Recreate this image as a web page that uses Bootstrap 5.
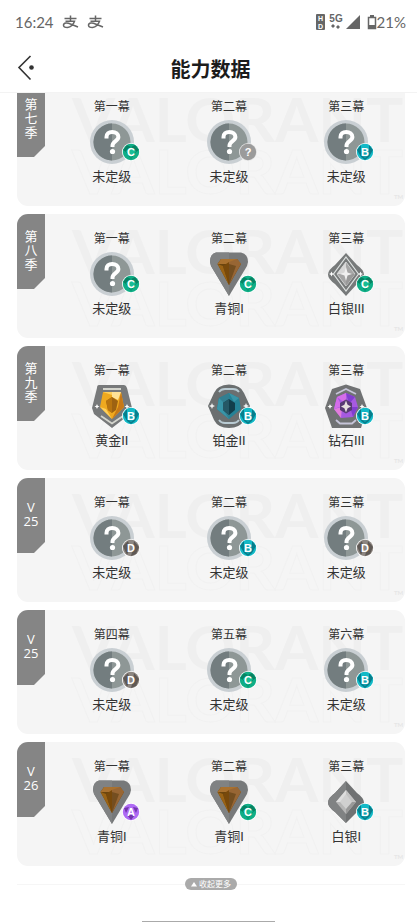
<!DOCTYPE html>
<html lang="zh-CN">
<head>
<meta charset="utf-8">
<meta name="viewport" content="width=device-width, initial-scale=1">
<title>能力数据</title>
<link href="https://cdn.jsdelivr.net/npm/bootstrap@5.3.0/dist/css/bootstrap.min.css" rel="stylesheet">
<style>
body{font-family:"Noto Sans CJK SC",sans-serif;color:#333;background:#fff}
.topbar{z-index:5;border-bottom:1px solid #f3f3f3}
.statusbar{height:44px;padding:0 11px 0 15px;font-family:Lato,sans-serif;font-size:15px;line-height:20px;color:#666}
.titlebar{height:48px;padding:2px 13px 0 17px}
.titlebar h1{font-size:20px;line-height:28px;color:#1c1c1c}
.back{width:24px;height:28px}
.seasons{margin:-11px 12px 0 17px;gap:8px}
.season{height:124px;padding-left:36px;background:#f5f5f5;border-radius:11px}
.season-tab{left:0;top:0;width:28px;height:75px;background:#858585;color:#fff;font-size:13px;line-height:14px;font-weight:400;clip-path:polygon(0 0,100% 0,100% 64px,17px 100%,0 100%);padding-bottom:4px}
.season-tab span{width:13px}
.vtab span{width:auto;font-family:"Open Sans",sans-serif}
.wordmark{left:55px;top:10px;font-family:Lato,sans-serif;font-weight:700;font-size:62px;line-height:52px;color:#efefef;user-select:none}
.wordmark .hollow{color:#f5f5f5;-webkit-text-stroke:1px #f1f1f1}
.wordmark .tm{font-size:6px;line-height:6px;right:0;bottom:-4px;color:#e6e6e6}
.act{padding-top:15px}
.act-label{font-size:12px;line-height:18px;margin-bottom:5px}
.rank-name{font-family:Roboto,"Noto Sans CJK SC",sans-serif;font-size:13px;line-height:18px;margin-top:4px}
.rank{width:44px;height:44px}
.rank svg{display:block}
.grade{left:32px;top:23px}
.foot{margin:12px 12px 0 17px}
.foot hr{border-color:#ddd;margin:0}
.more{background:#aaa;border-radius:6px;height:12px;width:52px;color:#fff;font-size:8px;line-height:12px;gap:2px}
.homebar{width:133px;height:1px;background:#aaa}
svg text{font-family:"Liberation Sans",sans-serif;font-weight:700;text-anchor:middle;fill:#fff}
</style>
<script src="https://cdn.jsdelivr.net/npm/bootstrap@5.3.0/dist/js/bootstrap.bundle.min.js"></script>
</head>
<body>
<svg width="0" height="0" class="position-absolute" aria-hidden="true">
<defs>
<symbol id="r-none" viewBox="0 0 44 44"><circle cx="22" cy="22" r="22" fill="#c9cfd3"/><circle cx="22" cy="22" r="18.500" fill="#8e9796"/><path d="M22 3.500a18.500 18.500 0 0 0 0 37z" fill="#737d7f"/><path d="M16.500 18.500V17c0-3.200 2.200-5 5.700-5s6.200 1.800 6.200 5c0 4-5.900 4.200-5.900 8.500v1.500" fill="none" stroke="#fff" stroke-width="4"/><circle cx="22.500" cy="31.500" r="2.600" fill="#fff"/></symbol>
<symbol id="r-bronze" viewBox="0 0 44 44"><path d="M9 .500H34Q41 2 41 10L40 14 22 44 4 14 3 10Q3 2 9 .500z" fill="#77797a"/><path d="M22 .500V44L4 14 3 10Q3 2 9 .500z" fill="#808283"/><path d="M14 7H30L34 12 22 33 10.500 12z" fill="#6b450f"/><path d="M14 7H30L34 12H10.500z" fill="#a9712f"/><path d="M22 10L30 7 34 12 22 33z" fill="#986634"/><path d="M10.500 12L16 14 22 33z" fill="#9a6315"/><path d="M16 14L22 10 22 33z" fill="#78490b"/><path d="M22 12L29 14 22 33z" fill="#744e20"/></symbol>
<symbol id="r-silver1" viewBox="0 0 44 44"><path d="M22 1L33 13Q40 18 40 22.500T33 32L22 43 11 32Q4 27 4 22.500T11 13z" fill="#707273"/><path d="M22 1V43L11 32Q4 27 4 22.500T11 13z" fill="#808283"/><path d="M22 10L32 22 22 34 12 22z" fill="#b6b6b6"/><path d="M22 10V22L12 22z" fill="#dedede"/><path d="M22 10L32 22H22z" fill="#c3c3c3"/><path d="M22 22L32 22 22 34z" fill="#999"/><path d="M22 14L28 22 22 29 16 22z" fill="#d0d0d0"/></symbol>
<symbol id="r-silver3" viewBox="0 0 44 44"><path d="M22 1L33 13Q40 18 40 22.500T33 32L22 44 11 32Q4 27 4 22.500T11 13z" fill="#777a7a"/><path d="M22 5L34.500 22 22 39 9.500 22z" fill="none" stroke="#dfe3e2" stroke-width="1.200"/><path d="M22 10L31 22 22 34 13 22z" fill="#a6a6a6" stroke="#cfd1d1"/><path d="M22 10V22L13 22z" fill="#d8d8d8"/><path d="M22 22L31 22 22 34z" fill="#999"/><path d="M22 15L23.500 20.500 28 22 23.500 23.500 22 29 20.500 23.500 16 22 20.500 20.500z" fill="#f0f0f0"/><path d="M7.500 19.500l.8 1.700 1.700.8-1.700.8-.8 1.700-.8-1.700-1.700-.8 1.700-.8zM36.500 19.500l.8 1.700 1.700.8-1.700.8-.8 1.700-.8-1.700-1.700-.8 1.700-.8z" fill="#fff"/></symbol>
<symbol id="r-gold" viewBox="0 0 44 44"><path d="M9 1H34Q36 1 37 4L42 24 40 30 22 44 4 30 2 24 7 4Q7 1 9 1z" fill="#77797a"/><path d="M13 5H31M11 32L22 39.500 33 32" fill="none" stroke="#d4d5cd" stroke-width="1.800"/><path d="M13 8H31L34 23 22 35 10 23z" fill="#efa91f"/><path d="M13 8L22 11V8zM10 23L16 25 22 35z" fill="#ffd05b"/><path d="M31 8L34 23 22 35 28 23z" fill="#c77817"/><path d="M22 8L31 8 28 16 22 13z" fill="#ffe296"/><path d="M22 13L28 17 26 26 22 29 18 26 16 17z" fill="#9d6212"/><path d="M22 13V29L18 26 16 17z" fill="#b77410"/><path d="M7 20l.8 1.700 1.700.8-1.700.8-.8 1.700-.8-1.700-1.700-.8 1.700-.8zM37 20l.8 1.700 1.700.8-1.700.8-.8 1.700-.8-1.700-1.700-.8 1.700-.8z" fill="#fff"/></symbol>
<symbol id="r-plat" viewBox="0 0 44 44"><path d="M22 .500Q34 1 37 9L43 22 37 36Q33 44 22 44T7 36L1 22 7 9Q10 1 22 .500z" fill="#6b6f70"/><path d="M12 8Q14 5 18 5H26Q30 5 32 8M12 36Q14 39 18 39H26Q30 39 32 36" fill="none" stroke="#b9cbd3" stroke-width="1.800"/><path d="M22 9L32 14 34 25 22 35 10 25 12 14z" fill="#258296"/><path d="M22 9V35L10 25 12 14z" fill="#327f91"/><path d="M12 14L16 18 17 27 22 35 10 25zM22 9L32 14 27 18z" fill="#3995a8"/><path d="M22 15L28 19V26L22 31 16 26V19z" fill="#123e4b"/><path d="M22 15V31L16 26V19z" fill="#255866"/><path d="M5 19l.9 2 2.100 1-2.100 1-.9 2-.9-2-2.100-1 2.100-1zM39 19l.9 2 2.100 1-2.100 1-.9 2-.9-2-2.100-1 2.100-1z" fill="#eee"/></symbol>
<symbol id="r-diamond" viewBox="0 0 44 44"><path d="M22 .500L36 5 43 24 37 44H8L1 24 8 5z" fill="#707273"/><path d="M12 10L22 5 32 10M12 36L16 39.500H28L32 36" fill="none" stroke="#c5c4d8" stroke-width="1.800"/><path d="M22 9L31 13 34 23 29 33 17 34 10 25 13 13z" fill="#a65ae0"/><path d="M22 9V20L13 13zM13 13L18 22 10 25z" fill="#d46de9"/><path d="M10 25L18 23 17 34z" fill="#e17ddb"/><path d="M22 9L31 13 25 20zM26 23L34 23 29 33z" fill="#813ecf"/><path d="M22 15.500L28 19 28 26 22 29.500 16 26 16 19z" fill="#573a73"/><path d="M22 16.500L23.600 20.800 27 22.500 23.600 24.200 22 28.500 20.400 24.200 17 22.500 20.400 20.800z" fill="#e6e1df"/><path d="M6 20l.8 1.700 1.700.8-1.700.8-.8 1.700-.8-1.700-1.700-.8 1.700-.8zM38 20l.8 1.700 1.700.8-1.700.8-.8 1.700-.8-1.700-1.700-.8 1.700-.8z" fill="#fff"/></symbol>
<symbol id="g-C" viewBox="0 0 18 18"><circle cx="9" cy="9" r="9" fill="#fff"/><circle cx="9" cy="9" r="8.200" fill="#0fae86"/><path d="M1 7L5 2 9 4 13 2 17 7 14 9 9 16 4 9z" fill="#078363"/><path d="M4 8L9 4 14 8 9 15z" fill="#16bd94"/><text x="9" y="13" font-size="11">C</text></symbol>
<symbol id="g-B" viewBox="0 0 18 18"><circle cx="9" cy="9" r="9" fill="#fff"/><circle cx="9" cy="9" r="8.200" fill="#13bac7"/><path d="M1 7L5 2V8L9 14 13 8V2L17 7 13 14 9 17 5 14z" fill="#087d8b"/><path d="M5 8L9 4 13 8V12L9 15 5 12z" fill="#12a4b2"/><text x="9" y="13" font-size="11">B</text></symbol>
<symbol id="g-D" viewBox="0 0 18 18"><circle cx="9" cy="9" r="9" fill="#fff"/><circle cx="9" cy="9" r="8.200" fill="#8d8681"/><path d="M1 7L6 2 8 9 5 16zM12 2L17 8 14 15 9 17 11 9z" fill="#5f5955"/><text x="9" y="13" font-size="11">D</text></symbol>
<symbol id="g-A" viewBox="0 0 18 18"><circle cx="9" cy="9" r="9" fill="#fff"/><circle cx="9" cy="9" r="8.200" fill="#ae6af4"/><path d="M2 5L7 4 4 10zM11 4L16 5 14 10zM5 12H13L9 17z" fill="#7336ad"/><text x="9" y="13" font-size="11">A</text></symbol>
<symbol id="g-N" viewBox="0 0 18 18"><circle cx="9" cy="9" r="9" fill="#e8e8e8"/><circle cx="9" cy="9" r="8.200" fill="#9b9b9b"/><text x="9" y="13" font-size="11">?</text></symbol>
<symbol id="pay" viewBox="0 0 16 14"><path d="M2 3.500H14M8 .500V6M3 6.300H12Q10 12 5 12.500 1 12.500 1 10.200C1 7.500 5 7.500 8 9L15.500 12" fill="none" stroke="#666" stroke-width="1.500"/></symbol>
</defs>
</svg>
<div class="d-flex flex-column min-vh-100 overflow-hidden">
<header class="topbar bg-white position-relative">
<div class="statusbar d-flex align-items-center justify-content-between">
<div class="d-flex align-items-center"><span class="me-2">16:24</span><svg class="me-2" width="17" height="14"><use href="#pay"/></svg><svg width="17" height="14"><use href="#pay"/></svg></div>
<div class="d-flex align-items-center">
<svg width="62" height="18" viewBox="0 0 62 18" role="img" aria-label="HD 5G"><rect x="1" y="1" width="9" height="16" rx="1" fill="#666"/><text x="5.500" y="8" font-size="7">H</text><text x="5.500" y="16" font-size="7">D</text><text x="21" y="9" font-size="10" style="fill:#666">5G</text><path d="M16 13l2-2 2 2-2 2zM21 14l2-2 2 2-2 2z" fill="#666"/><path d="M31 16L45 2V16z" fill="#666"/><path d="M53.500 4.500h7v11h-7z" fill="none" stroke="#666" stroke-width="1.500"/><path d="M55 2h4v2h-4zM53 12h8v4h-8z" fill="#666"/></svg>
<span>21%</span></div>
</div>
<div class="titlebar d-flex align-items-center justify-content-between">
<button type="button" class="back btn p-0 border-0 d-flex" aria-label="返回"><svg width="18" height="28" viewBox="0 0 18 28"><path d="M13.500 1L2 12.500 13.500 24.500" fill="none" stroke="#333" stroke-width="1.600"/><circle cx="14.500" cy="12.500" r="2.300" fill="#333"/></svg></button>
<h1 class="fw-bold m-0">能力数据</h1>
<span class="back"></span>
</div>
</header>
<main class="seasons d-flex flex-column">
<section class="season position-relative overflow-hidden">
<div class="wordmark position-absolute" aria-hidden="true"><div>VALORANT</div><div class="hollow">VALORANT</div><span class="tm position-absolute">TM</span></div>
<h2 class="season-tab position-absolute m-0 d-flex align-items-center justify-content-center text-center"><span>第七季</span></h2>
<div class="row g-0 text-center position-relative">
<div class="col act d-flex flex-column align-items-center"><div class="act-label">第一幕</div><div class="rank position-relative"><svg width="44" height="44"><use href="#r-none"/></svg><svg class="grade position-absolute" width="18" height="18"><use href="#g-C"/></svg></div><div class="rank-name">未定级</div></div>
<div class="col act d-flex flex-column align-items-center"><div class="act-label">第二幕</div><div class="rank position-relative"><svg width="44" height="44"><use href="#r-none"/></svg><svg class="grade position-absolute" width="18" height="18"><use href="#g-N"/></svg></div><div class="rank-name">未定级</div></div>
<div class="col act d-flex flex-column align-items-center"><div class="act-label">第三幕</div><div class="rank position-relative"><svg width="44" height="44"><use href="#r-none"/></svg><svg class="grade position-absolute" width="18" height="18"><use href="#g-B"/></svg></div><div class="rank-name">未定级</div></div>
</div>
</section>
<section class="season position-relative overflow-hidden">
<div class="wordmark position-absolute" aria-hidden="true"><div>VALORANT</div><div class="hollow">VALORANT</div><span class="tm position-absolute">TM</span></div>
<h2 class="season-tab position-absolute m-0 d-flex align-items-center justify-content-center text-center"><span>第八季</span></h2>
<div class="row g-0 text-center position-relative">
<div class="col act d-flex flex-column align-items-center"><div class="act-label">第一幕</div><div class="rank position-relative"><svg width="44" height="44"><use href="#r-none"/></svg><svg class="grade position-absolute" width="18" height="18"><use href="#g-C"/></svg></div><div class="rank-name">未定级</div></div>
<div class="col act d-flex flex-column align-items-center"><div class="act-label">第二幕</div><div class="rank position-relative"><svg width="44" height="44"><use href="#r-bronze"/></svg><svg class="grade position-absolute" width="18" height="18"><use href="#g-C"/></svg></div><div class="rank-name">青铜I</div></div>
<div class="col act d-flex flex-column align-items-center"><div class="act-label">第三幕</div><div class="rank position-relative"><svg width="44" height="44"><use href="#r-silver3"/></svg><svg class="grade position-absolute" width="18" height="18"><use href="#g-C"/></svg></div><div class="rank-name">白银III</div></div>
</div>
</section>
<section class="season position-relative overflow-hidden">
<div class="wordmark position-absolute" aria-hidden="true"><div>VALORANT</div><div class="hollow">VALORANT</div><span class="tm position-absolute">TM</span></div>
<h2 class="season-tab position-absolute m-0 d-flex align-items-center justify-content-center text-center"><span>第九季</span></h2>
<div class="row g-0 text-center position-relative">
<div class="col act d-flex flex-column align-items-center"><div class="act-label">第一幕</div><div class="rank position-relative"><svg width="44" height="44"><use href="#r-gold"/></svg><svg class="grade position-absolute" width="18" height="18"><use href="#g-B"/></svg></div><div class="rank-name">黄金II</div></div>
<div class="col act d-flex flex-column align-items-center"><div class="act-label">第二幕</div><div class="rank position-relative"><svg width="44" height="44"><use href="#r-plat"/></svg><svg class="grade position-absolute" width="18" height="18"><use href="#g-B"/></svg></div><div class="rank-name">铂金II</div></div>
<div class="col act d-flex flex-column align-items-center"><div class="act-label">第三幕</div><div class="rank position-relative"><svg width="44" height="44"><use href="#r-diamond"/></svg><svg class="grade position-absolute" width="18" height="18"><use href="#g-B"/></svg></div><div class="rank-name">钻石III</div></div>
</div>
</section>
<section class="season position-relative overflow-hidden">
<div class="wordmark position-absolute" aria-hidden="true"><div>VALORANT</div><div class="hollow">VALORANT</div><span class="tm position-absolute">TM</span></div>
<h2 class="season-tab vtab position-absolute m-0 d-flex align-items-center justify-content-center text-center"><span>V<br>25</span></h2>
<div class="row g-0 text-center position-relative">
<div class="col act d-flex flex-column align-items-center"><div class="act-label">第一幕</div><div class="rank position-relative"><svg width="44" height="44"><use href="#r-none"/></svg><svg class="grade position-absolute" width="18" height="18"><use href="#g-D"/></svg></div><div class="rank-name">未定级</div></div>
<div class="col act d-flex flex-column align-items-center"><div class="act-label">第二幕</div><div class="rank position-relative"><svg width="44" height="44"><use href="#r-none"/></svg><svg class="grade position-absolute" width="18" height="18"><use href="#g-B"/></svg></div><div class="rank-name">未定级</div></div>
<div class="col act d-flex flex-column align-items-center"><div class="act-label">第三幕</div><div class="rank position-relative"><svg width="44" height="44"><use href="#r-none"/></svg><svg class="grade position-absolute" width="18" height="18"><use href="#g-D"/></svg></div><div class="rank-name">未定级</div></div>
</div>
</section>
<section class="season position-relative overflow-hidden">
<div class="wordmark position-absolute" aria-hidden="true"><div>VALORANT</div><div class="hollow">VALORANT</div><span class="tm position-absolute">TM</span></div>
<h2 class="season-tab vtab position-absolute m-0 d-flex align-items-center justify-content-center text-center"><span>V<br>25</span></h2>
<div class="row g-0 text-center position-relative">
<div class="col act d-flex flex-column align-items-center"><div class="act-label">第四幕</div><div class="rank position-relative"><svg width="44" height="44"><use href="#r-none"/></svg><svg class="grade position-absolute" width="18" height="18"><use href="#g-D"/></svg></div><div class="rank-name">未定级</div></div>
<div class="col act d-flex flex-column align-items-center"><div class="act-label">第五幕</div><div class="rank position-relative"><svg width="44" height="44"><use href="#r-none"/></svg><svg class="grade position-absolute" width="18" height="18"><use href="#g-C"/></svg></div><div class="rank-name">未定级</div></div>
<div class="col act d-flex flex-column align-items-center"><div class="act-label">第六幕</div><div class="rank position-relative"><svg width="44" height="44"><use href="#r-none"/></svg><svg class="grade position-absolute" width="18" height="18"><use href="#g-B"/></svg></div><div class="rank-name">未定级</div></div>
</div>
</section>
<section class="season position-relative overflow-hidden">
<div class="wordmark position-absolute" aria-hidden="true"><div>VALORANT</div><div class="hollow">VALORANT</div><span class="tm position-absolute">TM</span></div>
<h2 class="season-tab vtab position-absolute m-0 d-flex align-items-center justify-content-center text-center"><span>V<br>26</span></h2>
<div class="row g-0 text-center position-relative">
<div class="col act d-flex flex-column align-items-center"><div class="act-label">第一幕</div><div class="rank position-relative"><svg width="44" height="44"><use href="#r-bronze"/></svg><svg class="grade position-absolute" width="18" height="18"><use href="#g-A"/></svg></div><div class="rank-name">青铜I</div></div>
<div class="col act d-flex flex-column align-items-center"><div class="act-label">第二幕</div><div class="rank position-relative"><svg width="44" height="44"><use href="#r-bronze"/></svg><svg class="grade position-absolute" width="18" height="18"><use href="#g-C"/></svg></div><div class="rank-name">青铜I</div></div>
<div class="col act d-flex flex-column align-items-center"><div class="act-label">第三幕</div><div class="rank position-relative"><svg width="44" height="44"><use href="#r-silver1"/></svg><svg class="grade position-absolute" width="18" height="18"><use href="#g-B"/></svg></div><div class="rank-name">白银I</div></div>
</div>
</section>
</main>
<div class="foot d-flex align-items-center"><hr class="flex-fill"><button type="button" class="more btn p-0 border-0 d-flex align-items-center justify-content-center"><svg width="6" height="5" viewBox="0 0 6 5" aria-hidden="true"><path d="M3 0L6 4.500H0z" fill="#fff"/></svg>收起更多</button><hr class="flex-fill"></div>
<div class="homebar mt-auto mx-auto"></div>
</div>
</body>
</html>
